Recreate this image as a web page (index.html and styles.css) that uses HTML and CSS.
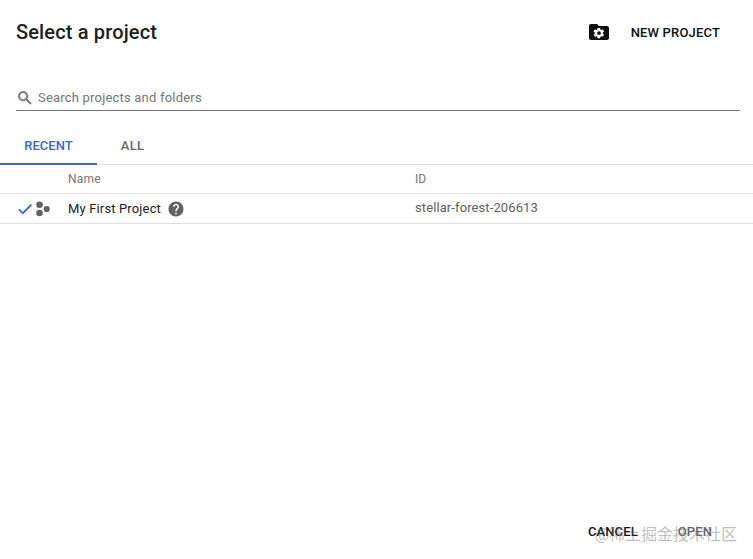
FILE: index.html
```html
<!DOCTYPE html>
<html lang="en">
<head>
<meta charset="utf-8">
<title>Select a project</title>
<link rel="stylesheet" href="styles.css">
</head>
<body>
<div class="dialog">
  <header class="head">
    <h1 class="title">Select a project</h1>
    <div class="new">
      <svg class="new-icon" width="24" height="24" viewBox="0 0 24 24"><path fill="#111" d="M20 6h-8l-2-2H4c-1.100 0-2 .9-2 2v12c0 1.100.9 2 2 2h16c1.100 0 2-.9 2-2V8c0-1.100-.9-2-2-2z"/><path fill="#fff" d="M18.900 13.900c0-.3.100-.6.100-.9s0-.6-.1-.9l2-1.600c.2-.1.200-.4.100-.6l-1.900-3.300c-.1-.2-.4-.3-.6-.2l-2.400 1c-.5-.4-1-.7-1.600-.9l-.4-2.500c0-.2-.2-.4-.5-.4h-3.800c-.2 0-.4.200-.5.400l-.4 2.500c-.6.200-1.100.5-1.600.9l-2.400-1c-.2-.1-.5 0-.6.200l-1.900 3.300c-.1.200-.1.500.1.600l2 1.600c0 .3-.1.600-.1.900s0 .6.100.9l-2 1.600c-.2.100-.2.400-.1.600l1.900 3.300c.1.200.4.300.6.200l2.400-1c.5.400 1 .7 1.600.9l.4 2.500c0 .2.200.4.500.4h3.800c.2 0 .4-.2.500-.4l.4-2.500c.6-.2 1.100-.5 1.600-.9l2.400 1c.2.100.5 0 .6-.2l1.900-3.300c.1-.2.100-.5-.1-.6zM12 16.500a3.500 3.500 0 1 1 0-7 3.500 3.500 0 0 1 0 7z" transform="translate(5.400 5.900) scale(.55)"/></svg>
      <span class="new-label">NEW PROJECT</span>
    </div>
  </header>
  <div class="search">
    <svg class="search-icon" width="18" height="18" viewBox="0 0 24 24"><path fill="#757575" stroke="#757575" stroke-width=".7" d="M15.500 14h-.79l-.28-.27A6.470 6.470 0 0 0 16 9.500 6.500 6.500 0 1 0 9.500 16c1.610 0 3.090-.59 4.230-1.570l.27.28v.79l5 4.990L20.490 19l-4.990-5zm-6 0C7.010 14 5 11.990 5 9.500S7.010 5 9.500 5 14 7.010 14 9.500 11.990 14 9.500 14z"/></svg>
    <span class="search-text">Search projects and folders</span>
  </div>
  <nav class="tabs">
    <span class="tab tab-active">RECENT</span>
    <span class="tab">ALL</span>
  </nav>
  <div class="row row-head">
    <span class="cell-icons"></span>
    <span class="cell-name">Name</span>
    <span class="cell-id">ID</span>
  </div>
  <div class="row row-body">
    <span class="cell-icons">
      <svg width="18" height="18" viewBox="0 0 24 24"><path fill="#3367d6" stroke="#3367d6" stroke-width=".7" d="M9 16.200 4.800 12l-1.400 1.400L9 19 21 7l-1.400-1.400z"/></svg>
      <svg class="dots" width="16" height="16" viewBox="0 0 16 16"><circle cx="4.500" cy="3.800" r="3.300" fill="#5f6368"/><circle cx="4.500" cy="12" r="3.300" fill="#5f6368"/><circle cx="11.700" cy="8" r="3.100" fill="#5f6368"/></svg>
    </span>
    <span class="cell-name">
      <span class="project">My First Project</span>
      <svg class="help" width="18" height="18" viewBox="0 0 24 24"><path fill="#5f6368" d="M12 2C6.480 2 2 6.480 2 12s4.480 10 10 10 10-4.480 10-10S17.520 2 12 2zm1 17h-2v-2h2v2zm2.070-7.750-.9.920C13.450 12.900 13 13.500 13 15h-2v-.5c0-1.100.45-2.100 1.170-2.830l1.240-1.260c.37-.36.59-.86.590-1.410 0-1.100-.9-2-2-2s-2 .9-2 2H8c0-2.210 1.790-4 4-4s4 1.790 4 4c0 .88-.36 1.680-.93 2.250z"/></svg>
    </span>
    <span class="cell-id">stellar-forest-206613</span>
  </div>
  <footer class="foot">
    <span class="btn">CANCEL</span>
    <span class="btn btn-open">OPEN</span>
  </footer>
  <div class="watermark">@稀土掘金技术社区</div>
</div>
</body>
</html>
```
FILE: styles.css
```css
* { box-sizing: border-box; }
html, body { margin: 0; height: 100%; background: #fff; }
body { font-family: Roboto, "Noto Sans CJK SC", sans-serif; overflow: hidden; }
.dialog { position: relative; width: 753px; height: 559px; display: flex; flex-direction: column; }
.head { display: flex; align-items: center; justify-content: space-between; height: 32px; margin-top: 16px; padding: 0 33px 0 16px; }
.title { margin: 0; font-size: 20px; font-weight: 500; color: #212121; line-height: 32px; letter-spacing: .15px; }
.new { display: flex; align-items: center; gap: 20px; }
.new-icon { display: block; }
.new-label { font-size: 13px; font-weight: 500; color: #111; letter-spacing: .17px; }
.search { display: flex; align-items: center; gap: 4px; height: 29px; margin: 34px 13px 0 16px; border-bottom: 1px solid #757575; padding-top: 3px; }
.search-text { font-size: 13px; color: #757575; letter-spacing: .2px; }
.tabs { display: flex; height: 43px; margin-top: 11px; border-bottom: 1px solid #e0e0e0; }
.tab { display: flex; align-items: center; justify-content: center; width: 97px; font-size: 13px; font-weight: 500; color: #666; padding-top: 4px; }
.tab + .tab { width: 71px; letter-spacing: .2px; }
.tab-active { color: #3f67c4; border-bottom: 2px solid #3f67c4; margin-bottom: -1px; padding-top: 6px; }
.row { display: flex; align-items: center; border-bottom: 1px solid #e0e0e0; }
.row-head { height: 29px; font-size: 12px; color: #757575; letter-spacing: .2px; }
.row-body { height: 30px; font-size: 13px; color: #212121; }
.cell-icons { display: flex; align-items: center; width: 68px; padding-left: 16px; }
.dots { margin-left: 1px; }
.cell-name { display: flex; align-items: center; width: 347px; }
.project { letter-spacing: .15px; }
.help { margin-left: 6px; }
.cell-id { color: #616161; letter-spacing: .1px; }
.row-head .cell-id { color: #757575; }
.row-body .cell-id { padding-bottom: 2px; }
.foot { display: flex; justify-content: flex-end; gap: 40px; margin-top: auto; padding: 0 41px 19px 0; font-size: 13px; font-weight: 500; color: #111; }
.btn { line-height: 16px; letter-spacing: .1px; }
.btn-open { color: #666; }
.watermark { position: absolute; right: 16px; bottom: 14px; font-size: 16px; line-height: 20px; color: rgba(110,110,110,.45); }
```
